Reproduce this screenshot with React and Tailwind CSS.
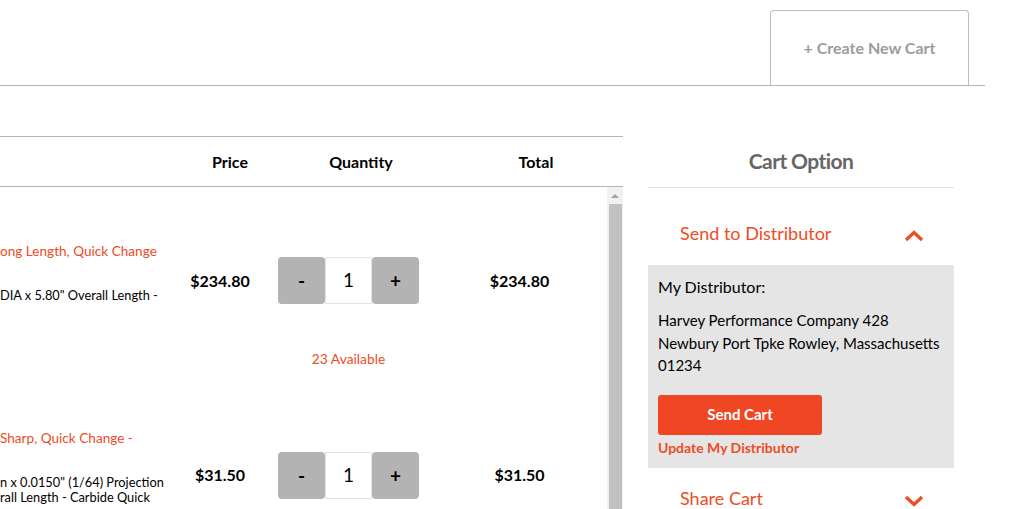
import React from "react";

function Chevron({ up }) {
  return (
    <svg width="20" height="12" viewBox="0 0 20 12" className="block">
      <polyline
        points={up ? "2,10 10,2.5 18,10" : "2,2 10,9.5 18,2"}
        fill="none"
        stroke="#ef4b25"
        strokeWidth="3.2"
      />
    </svg>
  );
}

function Qty() {
  return (
    <div className="flex h-[47px] w-[141px]">
      <button className="w-[47px] h-[47px] bg-[#b3b3b3] rounded-[4px] text-[19px] font-bold text-black leading-none">-</button>
      <div className="w-[47px] h-[47px] border border-[#e3e3e3] bg-white flex items-center justify-center text-[19px] text-black">1</div>
      <button className="w-[47px] h-[47px] bg-[#b3b3b3] rounded-[4px] text-[19px] font-bold text-black leading-none">+</button>
    </div>
  );
}

export default function App() {
  return (
    <div
      className="w-[1017px] h-[509px] overflow-hidden bg-white relative"
      style={{ fontFamily: "Lato, 'Open Sans', sans-serif" }}
    >
      <div className="w-[985px] h-[86px] border-b border-[#b5b5b5] flex justify-end pr-[16px]">
        <div className="mt-[10px] w-[199px] h-[75px] border border-b-0 border-[#bdbdbd] rounded-t-[4px] flex items-center justify-center text-[16px] font-bold text-[#9c9c9c]">
          + Create New Cart
        </div>
      </div>

      <div className="flex items-start">
        {/* Left table */}
        <div className="w-[623px] mt-[50px] border-t border-[#b5b5b5]">
          <div className="h-[50px] border-b border-[#b5b5b5] grid grid-cols-[175px_90px_167px_175px] items-center text-[16px] font-bold text-black">
            <div></div>
            <div className="text-center pl-[20px]">Price</div>
            <div className="text-center pl-[25px]">Quantity</div>
            <div className="text-center pl-[33px]">Total</div>
          </div>
          <div className="flex h-[330px]">
            <div className="w-[607px]">
              {/* Row 1 */}
              <div className="pt-[54px]">
                <div className="grid grid-cols-[175px_90px_167px_175px] items-start">
                  <div className="whitespace-nowrap">
                    <div className="text-[13.6px] leading-[20px] text-[#ef4b25]">ong Length, Quick Change</div>
                    <div className="mt-[27px] text-[12.8px] leading-[15px] text-black">DIA x 5.80" Overall Length -</div>
                  </div>
                  <div className="mt-[30px] text-center text-[16px] leading-[20px] font-bold text-black">$234.80</div>
                  <div className="mt-[16px] flex flex-col items-center">
                    <Qty />
                    <div className="mt-[45px] text-[13.8px] leading-[20px] text-[#ef4b25]">23 Available</div>
                  </div>
                  <div className="mt-[30px] text-center text-[16px] leading-[20px] font-bold text-black">$234.80</div>
                </div>
              </div>
              {/* Row 2 */}
              <div className="pt-[59px]">
                <div className="grid grid-cols-[175px_90px_167px_175px] items-start">
                  <div className="whitespace-nowrap">
                    <div className="text-[13.6px] leading-[20px] text-[#ef4b25]">Sharp, Quick Change -</div>
                    <div className="mt-[27px] text-[12.8px] leading-[15px] text-black">n x 0.0150" (1/64) Projection</div>
                    <div className="text-[12.8px] leading-[15px] text-black">rall Length - Carbide Quick</div>
                  </div>
                  <div className="mt-[37px] text-center text-[16px] leading-[20px] font-bold text-black">$31.50</div>
                  <div className="mt-[24px] flex flex-col items-center">
                    <Qty />
                  </div>
                  <div className="mt-[37px] text-center text-[16px] leading-[20px] font-bold text-black">$31.50</div>
                </div>
              </div>
            </div>
            {/* Scrollbar */}
            <div className="w-[16px] bg-[#f1f1f1] flex flex-col items-center">
              <div className="h-[17px] flex items-center justify-center">
                <div className="w-0 h-0 border-l-[4px] border-r-[4px] border-b-[4px] border-l-transparent border-r-transparent border-b-[#a3a3a3]"></div>
              </div>
              <div className="w-[13px] flex-1 bg-[#c1c1c1]"></div>
            </div>
          </div>
        </div>

        {/* Right panel */}
        <div className="ml-[25px] w-[306px]">
          <div className="pt-[61px] pb-[12px] border-b border-[#e3e3e3] text-center text-[21px] leading-[28px] font-bold text-[#666] tracking-[-0.6px]">
            Cart Option
          </div>
          <div className="pt-[33px] pb-[20px] pl-[32px] pr-[30px] flex items-center justify-between">
            <span className="text-[18px] leading-[24px] text-[#ef4b25]">Send to Distributor</span>
            <span className="mt-[6px]"><Chevron up /></span>
          </div>
          <div className="bg-[#e5e5e5] pl-[10px] pr-[8px] pt-[11px] pb-[11px] text-black">
            <div className="text-[16px] leading-[22px]">My Distributor:</div>
            <div className="mt-[11px] text-[15px] leading-[22.5px]">
              Harvey Performance Company 428 Newbury Port Tpke Rowley, Massachusetts 01234
            </div>
            <button className="mt-[18px] w-[164px] h-[40px] bg-[#ef4724] rounded-[3px] text-white font-bold text-[15px]">
              Send Cart
            </button>
            <div className="mt-[4px] text-[14px] leading-[18px] font-bold text-[#ef4b25]">Update My Distributor</div>
          </div>
          <div className="pt-[18px] pl-[32px] pr-[30px] flex items-center justify-between">
            <span className="text-[18px] leading-[24px] text-[#ef4b25]">Share Cart</span>
            <span className="mt-[6px]"><Chevron /></span>
          </div>
        </div>
      </div>
    </div>
  );
}
